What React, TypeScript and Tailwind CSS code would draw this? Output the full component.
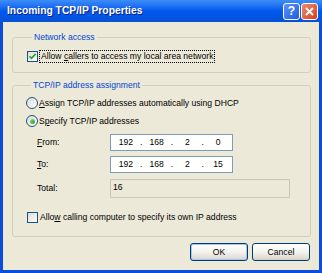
import React from 'react';

const U = ({ children }: { children: React.ReactNode }) => (
    <span className="underline decoration-1 underline-offset-[1px]">{children}</span>
);

const CheckBox = ({ checked }: { checked?: boolean }) => (
    <span className="flex h-[11px] w-[11px] shrink-0 items-center justify-center border border-[#1C5180] bg-gradient-to-br from-[#DCDCD7] to-white">
        {checked && (
            <svg width="9" height="9" viewBox="0 0 9 9">
                <path d="M1.5 4.2 L3.5 6.3 L7.6 1.9" fill="none" stroke="#21A121" strokeWidth="1.6" />
            </svg>
        )}
    </span>
);

const Radio = ({ checked }: { checked?: boolean }) => (
    <span className="flex h-[12px] w-[12px] shrink-0 items-center justify-center rounded-full border border-[#1C5180] bg-gradient-to-br from-[#DCDCD7] to-white">
        {checked && <span className="h-[5px] w-[5px] rounded-full bg-gradient-to-br from-[#7EE17E] to-[#1F9A1F]" />}
    </span>
);

const IpBox = ({ parts }: { parts: string[] }) => (
    <div className="flex h-[17px] w-[123px] items-center border border-[#7F9DB9] bg-white pl-[1px]">
        {parts.map((p, i) => (
            <React.Fragment key={i}>
                {i > 0 && <span className="w-[3px] text-center leading-none">.</span>}
                <span className="w-[28px] text-center">{p}</span>
            </React.Fragment>
        ))}
    </div>
);

const XpButton = ({ label, isDefault }: { label: string; isDefault?: boolean }) => (
    <button
        className={
            'flex h-[18px] w-[58px] items-center justify-center rounded-[3px] border border-[#003C74] bg-gradient-to-b from-white via-[#F4F3EE] to-[#D9D5C9] text-black ' +
            (isDefault ? 'shadow-[inset_0_0_0_1px_#A9C3F3]' : 'shadow-[inset_0_-1px_0_#D6D0C5]')
        }
    >
        {label}
    </button>
);

export default function App() {
    return (
        <div className="flex h-[273px] w-[322px] flex-col bg-[#0A4DDB] font-['Liberation_Sans',Arial,sans-serif] text-[8.6px] text-black">
            {/* title bar */}
            <div className="flex h-[22px] shrink-0 items-center bg-gradient-to-b from-[#3D8DF7] via-[#0058EE] to-[#0552D6] pl-[7px] pr-[4px]">
                <span className="flex-1 text-[10.3px] font-bold text-white [text-shadow:1px_1px_0_#0A1E8A]">
                    Incoming TCP/IP Properties
                </span>
                <div className="flex gap-[1px]">
                    <span className="flex h-[17px] w-[17px] items-center justify-center rounded-[3px] border border-white bg-gradient-to-br from-[#5C93F5] to-[#1F5CE0] text-[12px] font-bold leading-none text-white">
                        ?
                    </span>
                    <span className="flex h-[17px] w-[17px] items-center justify-center rounded-[3px] border border-white bg-gradient-to-br from-[#EA8A6C] to-[#D63C16]">
                        <svg width="9" height="9" viewBox="0 0 9 9">
                            <path d="M1 1 L8 8 M8 1 L1 8" stroke="white" strokeWidth="1.8" />
                        </svg>
                    </span>
                </div>
            </div>

            {/* client area */}
            <div className="mx-[3px] mb-[3px] flex flex-1 flex-col bg-[#ECE9D8] pl-[9px] pr-[8px]">
                <fieldset className="mt-[10px] rounded-[3px] border border-[#D0D0BF] pb-[10px] pl-[14px]">
                    <legend className="ml-[5px] px-[2px] leading-[11px] text-[#0046D5]">Network access</legend>
                    <div className="mt-[7px] flex h-[12px] items-center gap-[2px]">
                        <CheckBox checked />
                        <span className="px-[1px] leading-[11px] outline outline-1 outline-dotted outline-black">
                            Allow <U>c</U>allers to access my local area network
                        </span>
                    </div>
                </fieldset>

                <fieldset className="mt-[7px] rounded-[3px] border border-[#D0D0BF] pb-[13px] pl-[13px]">
                    <legend className="ml-[5px] px-[2px] leading-[11px] text-[#0046D5]">TCP/IP address assignment</legend>
                    <div className="mt-[6px] flex h-[12px] items-center gap-[1px]">
                        <Radio />
                        <span>
                            <U>A</U>ssign TCP/IP addresses automatically using DHCP
                        </span>
                    </div>
                    <div className="mt-[6px] flex h-[12px] items-center gap-[1px]">
                        <Radio checked />
                        <span>
                            S<U>p</U>ecify TCP/IP addresses
                        </span>
                    </div>
                    <div className="mt-[7px] flex items-center pl-[11px]">
                        <span className="w-[73px]">
                            <U>F</U>rom:
                        </span>
                        <IpBox parts={['192', '168', '2', '0']} />
                    </div>
                    <div className="mt-[5px] flex items-center pl-[11px]">
                        <span className="w-[73px]">
                            <U>T</U>o:
                        </span>
                        <IpBox parts={['192', '168', '2', '15']} />
                    </div>
                    <div className="mt-[6px] flex items-center pl-[11px]">
                        <span className="w-[73px]">Total:</span>
                        <div className="h-[19px] w-[180px] border border-[#C9C7BA] bg-[#ECE9D8] pl-[2px] leading-[14px]">16</div>
                    </div>
                    <div className="mt-[13px] flex h-[12px] items-center gap-[2px] pl-[1px]">
                        <CheckBox />
                        <span>
                            Allo<U>w</U> calling computer to specify its own IP address
                        </span>
                    </div>
                </fieldset>

                <div className="mt-[6px] flex justify-end gap-[4px] pr-[1px]">
                    <XpButton label="OK" isDefault />
                    <XpButton label="Cancel" />
                </div>
            </div>
        </div>
    );
}
